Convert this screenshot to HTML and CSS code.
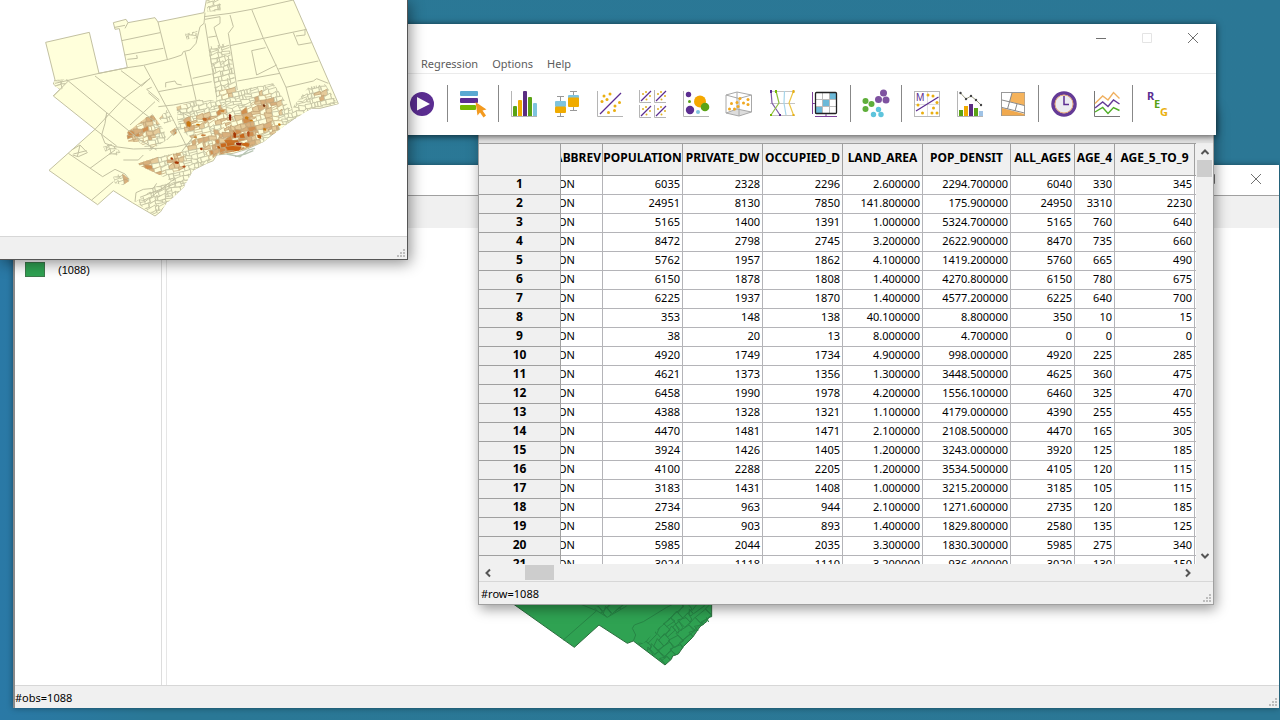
FILE: index.html
```html
<!DOCTYPE html>
<html lang="en">
<head>
<meta charset="utf-8">
<title>GeoDa</title>
<link rel="stylesheet" href="styles.css">
</head>
<body>
<main class="desktop">

  <section class="window map-window" aria-label="Map">
    <header class="titlebar">
      <button class="win-btn" aria-label="Minimize"><svg class="win-icon" viewBox="0 0 12 12"><path d="M1 6.5H11"/></svg></button>
      <button class="win-btn" aria-label="Maximize"><svg class="win-icon" viewBox="0 0 12 12"><path d="M1.500 1.500H10.500V10.500H1.500Z"/></svg></button>
      <button class="win-btn" aria-label="Close"><svg class="win-icon" viewBox="0 0 12 12"><path d="M1 1L11 11M11 1L1 11"/></svg></button>
    </header>
    <div class="map-tools"></div>
    <div class="map-body">
      <aside class="legend"><span class="swatch"></span><span>(1088)</span></aside>
      <div class="map-canvas">
        <svg class="map-svg" aria-label="Base map">
          <g transform="translate(303 302) scale(.33333)">
            <path class="green-land" d="M60 170L130 222L313 352L387 285L472 340L490 333L585 405L604 388L608 378L625 372L640 350L668 322L690 290L710 275L716 262L725 260V170Z"/>
            <path class="green-line" d="M280 330L380 242L330 222M380 242L412 262L470 228M490 333L497 315L487 295L493 285L520 275L590 232L610 222M709 262L716 276"/>
            <clipPath id="greenClip"><path d="M520 340L640 222H724V258L668 320L625 370L585 402L495 335Z"/><path d="M372 235L395 222H475L410 262Z"/></clipPath>
            <g id="greenMesh" clip-path="url(#greenClip)" class="green-line"></g>
          </g>
        </svg>
      </div>
    </div>
    <footer class="statusbar"><span>#obs=1088</span><svg class="grip" viewBox="0 0 9 9"><path d="M6 0h2v2h-2zM3 3h2v2h-2zM6 3h2v2h-2zM0 6h2v2h-2zM3 6h2v2h-2zM6 6h2v2h-2z"/></svg></footer>
  </section>

  <section class="window table-window" aria-label="Table">
    <div class="table-title"></div>
    <div class="table-area">
      <div class="table-clip">
        <table class="grid">
          <colgroup><col class="c-row"><col class="c-abbr"><col class="c-80"><col class="c-80"><col class="c-80"><col class="c-80"><col class="c-88"><col class="c-64"><col class="c-40"><col class="c-80"><col></colgroup>
          <thead><tr><th></th><th class="abbr"><div class="cut"><span>ABBREV</span></div></th><th>POPULATION</th><th>PRIVATE_DW</th><th>OCCUPIED_D</th><th>LAND_AREA</th><th>POP_DENSIT</th><th>ALL_AGES</th><th>AGE_4</th><th>AGE_5_TO_9</th><th></th></tr></thead>
          <tbody id="rows"></tbody>
        </table>
      </div>
      <div class="vscroll">
        <button class="arrow" aria-label="Scroll up"><svg viewBox="0 0 10 10"><path d="M1.500 7L5 3.500L8.500 7"/></svg></button>
        <div class="vthumb"></div>
        <button class="arrow last" aria-label="Scroll down"><svg viewBox="0 0 10 10"><path d="M1.500 3L5 6.500L8.500 3"/></svg></button>
      </div>
    </div>
    <div class="hscroll">
      <button class="arrow" aria-label="Scroll left"><svg viewBox="0 0 10 10"><path d="M7 1.500L3.500 5L7 8.500"/></svg></button>
      <div class="hthumb"></div>
      <button class="arrow last" aria-label="Scroll right"><svg viewBox="0 0 10 10"><path d="M3 1.500L6.500 5L3 8.500"/></svg></button>
    </div>
    <footer class="statusbar"><span>#row=1088</span><svg class="grip" viewBox="0 0 9 9"><path d="M6 0h2v2h-2zM3 3h2v2h-2zM6 3h2v2h-2zM0 6h2v2h-2zM3 6h2v2h-2zM6 6h2v2h-2z"/></svg></footer>
  </section>

  <section class="window main-window" aria-label="GeoDa">
    <header class="titlebar">
      <button class="win-btn" aria-label="Minimize"><svg class="win-icon" viewBox="0 0 12 12"><path d="M1 6.500H11"/></svg></button>
      <button class="win-btn faint" aria-label="Maximize" disabled><svg class="win-icon" viewBox="0 0 12 12"><path d="M1.500 1.500H10.500V10.500H1.500Z"/></svg></button>
      <button class="win-btn" aria-label="Close"><svg class="win-icon" viewBox="0 0 12 12"><path d="M1 1L11 11M11 1L1 11"/></svg></button>
    </header>
    <nav class="menubar"><button>Regression</button><button>Options</button><button>Help</button></nav>
    <div class="toolbar">
      <button aria-label="Time player"><svg viewBox="0 0 32 32"><circle cx="16" cy="16" r="12" fill="#5b2d91"/><path d="M11 9L24 16L11 22.500Z" fill="#fff"/></svg></button>
      <i class="sep"></i>
      <button aria-label="Category editor"><svg viewBox="0 0 32 32"><rect x="3" y="3" width="18" height="5" rx="1" fill="#5ba9d2"/><rect x="3" y="10" width="18" height="5" rx="1" fill="#5b2d91"/><rect x="3" y="17" width="16" height="5" rx="1" fill="#76b900"/><path d="M18.500 14L29.500 21.500L25.500 22.500L29 27.500L26.500 29.500L23 24.500L20.500 27.500Z" fill="#f39a1f"/></svg></button>
      <i class="sep"></i>
      <button aria-label="Histogram"><svg viewBox="0 0 32 32"><path d="M3.500 3V28.500H29" class="axis"/><path d="M5 28V19q0-1 1-1h2q1 0 1 1v9zM20 28V10q0-1 1-1h2q1 0 1 1v18z" fill="#5aa315"/><path d="M10 28V13q0-1 1-1h2q1 0 1 1v15z" fill="#f0ab00"/><path d="M15 28V4q0-1 1-1h2q1 0 1 1v24z" fill="#5b2d82"/><path d="M25 28V16q0-1 1-1h2q1 0 1 1v12z" fill="#7fc4de"/></svg></button>
      <button aria-label="Box plot"><svg viewBox="0 0 32 32"><path d="M9.500 8.500V28.500M6 8.500H13M6 28.500H13M22.500 3.500V22.500M19 3.500H26M19 22.500H26" fill="none" stroke="#999"/><rect x="4" y="13" width="11" height="6" rx="1" fill="#7fc4de"/><rect x="4" y="18.500" width="11" height="6.500" rx="1" fill="#f0ab00"/><rect x="17" y="7" width="11" height="5" rx="1" fill="#7fc4de"/><rect x="17" y="9.500" width="11" height="9.500" rx="1" fill="#f0ab00"/></svg></button>
      <button aria-label="Scatter plot"><svg viewBox="0 0 32 32"><path d="M3.500 3V28.500H29" class="axis"/><path d="M6 26L27 5" stroke="#5b2d91" stroke-width="1.300"/><g fill="#eaaf10"><circle cx="10" cy="8" r="1.500"/><circle cx="16" cy="6" r="1.500"/><circle cx="13" cy="11.500" r="1.500"/><circle cx="8" cy="13.500" r="1.500"/><circle cx="25.500" cy="14.500" r="1.500"/><circle cx="21" cy="18" r="1.500"/><circle cx="20.500" cy="22.500" r="1.500"/><circle cx="14.500" cy="24.500" r="1.500"/></g></svg></button>
      <button aria-label="Scatter plot matrix"><svg viewBox="0 0 32 32"><defs><g id="mini"><path d="M.5 0V12.500H12" class="axis"/><path d="M2 11L12 1" stroke="#5b2d91" stroke-width="1.300"/><g fill="#e0b020"><circle cx="4" cy="4" r="1"/><circle cx="7" cy="2" r="1"/><circle cx="11" cy="6" r="1"/><circle cx="7.500" cy="9.500" r="1"/></g></g></defs><use href="#mini" x="2" y="2"/><use href="#mini" x="17" y="2"/><use href="#mini" x="2" y="17"/><use href="#mini" x="17" y="17"/></svg></button>
      <button aria-label="Bubble chart"><svg viewBox="0 0 32 32"><path d="M3.500 3V28.500H29" class="axis"/><circle cx="8.500" cy="6.500" r="2.700" fill="#5b2d91"/><circle cx="9.500" cy="13.500" r="1.500" fill="#5aa315"/><circle cx="20" cy="13.500" r="6" fill="#f5a800"/><circle cx="25" cy="19" r="4.300" fill="#5aa315"/><circle cx="10" cy="22" r="4.200" fill="#5b2d91"/><circle cx="18" cy="24" r="2" fill="#7fc4de"/></svg></button>
      <button aria-label="3D scatter plot"><svg viewBox="0 0 32 32"><path d="M3 25L14 21L28.500 24L16 28Z" fill="#ddd"/><path d="M3 7L14 4L28.500 7L16 10.500ZM3 7V25L16 28L28.500 24V7M16 10.500V28M14 4V21M3 25L14 21L28.500 24" fill="none" stroke="#a8a8a8"/><g fill="#f0a820"><circle cx="8.500" cy="15.500" r="1.500"/><circle cx="14" cy="14.500" r="1.500"/><circle cx="17" cy="10.500" r="1.500"/><circle cx="25" cy="11.500" r="1.500"/><circle cx="20.500" cy="15" r="1.500"/><circle cx="25" cy="16.500" r="1.500"/><circle cx="6.500" cy="21" r="1.500"/><circle cx="11.500" cy="21" r="1.500"/><circle cx="15" cy="18.500" r="1.500"/></g></svg></button>
      <button aria-label="Parallel coordinate plot"><svg viewBox="0 0 32 32"><path d="M4 3.500H29M4 15.500H29M4 27.500H29" stroke="#c4c4c4"/><g fill="none" stroke-width="1.200"><path d="M5 3L6 15L14 27" stroke="#7d5ba6"/><path d="M10 3L13 15L5 27" stroke="#8fbe3f"/><path d="M18.500 3L18 15L20 27" stroke="#a6d5ea"/><path d="M27.500 3L23 15L27.500 27" stroke="#ecc545"/></g><path d="M4 2h2v3H4zM13 26h2v2h-2z" fill="#5b2d91"/><path d="M9 2h2v3H9zM4 26h2v2H4z" fill="#76b900"/><path d="M26.500 2h2v3h-2zM26.500 26h2v2h-2z" fill="#eaaf10"/></svg></button>
      <button aria-label="Conditional plot"><svg viewBox="0 0 32 32"><path d="M20 5h7v7h-7zM13 12h7v7h-7zM6 19h7v7H6z" fill="#6cb9d8"/><path d="M13.500 5V26M20.500 5V26M7 11.500H28M7 18.500H28" stroke="#bbb"/><rect x="6.500" y="4.500" width="21" height="21" rx="1" fill="none" stroke="#222" stroke-width="1.300"/><path d="M3.500 4V26M3.500 15.500H6M6 28.500H28M17 26V28" stroke="#7d3f98"/></svg></button>
      <i class="sep"></i>
      <button aria-label="Cluster maps"><svg viewBox="0 0 32 32"><g fill="#7e52a0"><circle cx="23.500" cy="5" r="3.500"/><circle cx="18.500" cy="11.500" r="3.500"/><circle cx="26" cy="12" r="3.500"/></g><g fill="#5fae3a"><circle cx="5.500" cy="13" r="3"/><circle cx="11.500" cy="16" r="3"/><circle cx="5.500" cy="21" r="3"/></g><g fill="#5ec4dc"><circle cx="18.500" cy="21.500" r="2.700"/><circle cx="13.500" cy="26.500" r="2.700"/><circle cx="21" cy="26.500" r="2.700"/></g></svg></button>
      <i class="sep"></i>
      <button aria-label="Moran scatter plot"><svg viewBox="0 0 32 32"><rect x="3.500" y="3.500" width="25" height="25" fill="#fff" stroke="#b8b8b8"/><path d="M16.500 4V28M4 16.500H28" stroke="#ddd"/><path d="M5 23L27.500 9" stroke="#5b2d91" stroke-width="1.300"/><text x="5" y="13" class="m-letter">M</text><g fill="#eaaf10"><circle cx="17" cy="7" r="1.500"/><circle cx="22" cy="8" r="1.500"/><circle cx="26" cy="14.500" r="1.500"/><circle cx="7" cy="17" r="1.500"/><circle cx="22.500" cy="20" r="1.500"/><circle cx="11.500" cy="25" r="1.500"/><circle cx="21" cy="25" r="1.500"/><circle cx="26" cy="25" r="1.500"/></g></svg></button>
      <button aria-label="Correlogram"><svg viewBox="0 0 32 32"><path d="M3.500 3V28.500H29" class="axis"/><path d="M6.500 5L12 11L17 8L22 12L27 17" fill="none" stroke="#9a9a80"/><g fill="#444"><circle cx="6.500" cy="5" r="1.200"/><circle cx="12" cy="11" r="1.200"/><circle cx="17" cy="8" r="1.200"/><circle cx="22" cy="12" r="1.200"/><circle cx="27" cy="17" r="1.200"/></g><path d="M5 22h4v6H5zM20 20h4v8h-4z" fill="#5aa315"/><path d="M10 18h4v10h-4z" fill="#f0ab00"/><path d="M15 16h4v12h-4z" fill="#5b2d82"/><path d="M25 23h4v5h-4z" fill="#9fc3e6"/></svg></button>
      <button aria-label="Cartographic base map"><svg viewBox="0 0 32 32"><rect x="4.500" y="4.500" width="23" height="23" fill="#fff" stroke="#999"/><path d="M15 5H27.500V17.500L12.500 13.500Z" fill="#f5b35c"/><path d="M5 20L27.500 26V27.500H5Z" fill="#f0a94e"/><path d="M15 5L10.500 21M5 12L27.500 17.500M5 19.500L27.500 25M20 16L18 23" fill="none" stroke="#888"/></svg></button>
      <i class="sep"></i>
      <button aria-label="Time"><svg viewBox="0 0 32 32"><circle cx="16" cy="16" r="11" fill="#ececf1" stroke="#643a96" stroke-width="3.500"/><circle cx="16" cy="16" r="9" fill="none" stroke="#e3a578"/><path d="M16 8V16.500H21" fill="none" stroke="#5b2d91" stroke-width="1.500"/></svg></button>
      <button aria-label="Averages chart"><svg viewBox="0 0 32 32"><path d="M3.500 3V28.500H29" fill="none" stroke="#777"/><g fill="none" stroke-width="1.400"><path d="M4 15.500L11.700 8L17 12L22.500 4.500L28.500 10.500" stroke="#f0b060"/><path d="M4 20L11.700 14L17 18.500L22.500 12L28.500 16" stroke="#643a96"/><path d="M4 24L11.700 19.500L17 25.500L22.500 19.500L28.500 22.500" stroke="#4fae25"/></g></svg></button>
      <i class="sep"></i>
      <button aria-label="Regression"><svg viewBox="0 0 32 32"><g class="reg"><text x="5" y="12" fill="#5b2d91">R</text><text x="12" y="20" fill="#5aa315">E</text><text x="18" y="28" fill="#eab010">G</text></g></svg></button>
    </div>
  </section>

  <section class="window choro-window" aria-label="Choropleth map">
    <div class="choro-body">
      <svg class="choro-svg" viewBox="0 0 1221 708" preserveAspectRatio="xMinYMin meet" aria-label="Population density map">
        <defs>
          <clipPath id="dense">
            <path d="M530 320L600 300L650 300L625 142L686 128L710 272L820 250L872 330L925 262L975 252L1013 311L935 325L870 365L790 425L735 448L650 465L620 490L580 510L552 560L465 646L405 605L432 590L460 562L520 545L410 492L475 470L545 455L575 415L535 385Z"/>
            <path d="M378 400L455 340L492 390L500 420L450 452L415 425L385 425Z"/>
            <path d="M478 355L500 330L520 360L495 372ZM510 395L530 380L542 388L520 408ZM620 0H662V34H622ZM555 102L592 92V115L560 118ZM340 530L365 520L392 540L370 555L345 550ZM310 440L330 430L362 455L345 470L318 458ZM162 240L205 238L185 268L165 260Z"/>
          </clipPath>
        </defs>
        <path class="land" d="M137 127L268 97L297 220L382 203L358 86L345 88L340 68L378 58L384 68L465 53L474 66L612 38L619 0V-20H872L880 0L1015 311L960 325L935 325L905 340L870 365L845 382L790 425L740 448L700 460L650 465L640 482L620 490L580 510L552 540L552 560L520 590L500 605L482 635L465 648L397 608L340 572L293 614L147 511L285 388L160 288L180 268L160 252L165 240Z"/>
        <g id="choroMesh" clip-path="url(#dense)"></g>
        <g class="tract">
          <path d="M165 250L297 220L382 203L430 196L505 178L525 172L545 165L550 155L570 150L588 130L600 80L612 70L615 38M205 243L320 338L420 420L470 450M205 243L160 288M285 228L465 365M363 212L425 258L450 235L372 295L285 388L350 438M432 196L475 275L520 360L560 440M475 275L635 245M475 320L520 315L600 300M555 155L588 300M578 235L635 222M365 122L480 98M374 165L490 145M474 66L502 178M382 178L412 175L410 165M375 85L384 68M345 82L375 76"/>
          <path d="M615 70L640 225L650 290M612 50L690 40L755 28L880 0M755 28L790 115L830 200L858 262L875 325M690 45L700 80L685 100L712 270M690 137L790 115L920 88M797 143L755 152L770 225L830 195M835 207L955 183M712 243L840 220M858 262L940 243L950 236L985 250M880 98L895 135L935 128M915 88V105L888 108M615 58L660 50V70L642 82L650 108L625 112M650 108L660 140M497 262V248L525 243L530 252L545 255M455 262L440 268L478 300M445 278L478 306"/>
          <path d="M320 338L315 370L305 405L315 430L345 440L400 447L480 445L530 440L570 430M205 460L308 530L345 508L375 522L385 535M270 505L345 450M275 600L340 545M370 480L415 480L430 465M322 345L315 355M465 305L390 375M570 350L530 330M405 605L408 578L430 568L460 565L470 550M545 455L580 410M500 420L535 385M215 450L240 435L262 458L235 470L218 465M240 435L232 470M220 462L260 452M420 592L540 545M435 605L525 535"/>
        </g>
        <path class="coast" d="M680 462L720 470L745 450L765 445M705 470L735 462L760 452"/>
        <g id="hotspots"></g>
      </svg>
    </div>
    <footer class="statusbar"><span></span><svg class="grip" viewBox="0 0 9 9"><path d="M6 0h2v2h-2zM3 3h2v2h-2zM6 3h2v2h-2zM0 6h2v2h-2zM3 6h2v2h-2zM6 6h2v2h-2z"/></svg></footer>
  </section>

</main>
<script src="app.js"></script>
</body>
</html>
```
FILE: styles.css
```css
* { box-sizing: border-box; }
body {
  margin: 0;
  font-family: "Noto Sans", "Open Sans", sans-serif;
  font-size: 11px;
  color: #000;
}
button {
  border: 0;
  padding: 0;
  background: none;
  font: inherit;
  color: inherit;
}
.desktop {
  position: relative;
  height: 100vh;
  overflow: hidden;
  background: linear-gradient(90deg, #2a79a6, #2a7896 12%, #2b7795);
}
.window {
  position: absolute;
  display: flex;
  flex-direction: column;
  background: #fff;
}
.map-window {
  left: 13px;
  right: 1px;
  top: 165px;
  bottom: 12px;
  border-left: 2px solid #8a8a8a;
  box-shadow: 0 0 6px rgba(0, 0, 0, .4);
}
.table-window {
  left: 478px;
  right: 66px;
  top: 105px;
  bottom: 115px;
  border: 1px solid #a0a0a0;
  box-shadow: 2px 4px 12px rgba(0, 0, 0, .4);
}
.main-window {
  left: 400px;
  right: 64px;
  top: 24px;
  box-shadow: 0 1px 7px rgba(0, 0, 0, .7);
}
.choro-window {
  left: 0;
  width: 408px;
  top: 0;
  border-right: 1px solid #555;
  border-bottom: 1px solid #555;
  box-shadow: 2px 3px 14px rgba(0, 0, 0, .45);
}
.titlebar {
  display: flex;
  justify-content: flex-end;
  height: 30px;
  padding-bottom: 2px;
  flex: none;
}
.win-btn {
  width: 46px;
  display: flex;
  align-items: center;
  justify-content: center;
}
.win-icon {
  width: 12px;
  height: 12px;
  fill: none;
  stroke: #707070;
}
.faint .win-icon { stroke: #e4e4e4; }

.map-tools {
  height: 33px;
  flex: none;
  border-top: 1px solid #a0a0a0;
  background: #f0f0f0;
}
.map-body { display: flex; flex: 1; min-height: 0; }
.legend {
  width: 147px;
  padding: 34px 0 0 10px;
  display: flex;
  align-items: flex-start;
  gap: 13px;
  border-right: 1px solid #ddd;
  font: 11px/16px "Liberation Sans", Arial, sans-serif;
}
.swatch {
  width: 20px;
  height: 15px;
  border: 1px solid #3d7a4c;
  background: #2fa252;
}
.map-canvas {
  flex: 1;
  min-width: 0;
  margin-left: 4px;
  border-left: 1px solid #e6e6e6;
}
.map-svg { display: block; width: 100%; height: 100%; }
.green-land { fill: #2fa252; stroke: #2a6b3c; stroke-width: 3; }
.green-line { fill: none; stroke: #278545; stroke-width: 3; }

.statusbar {
  display: flex;
  align-items: center;
  justify-content: space-between;
  height: 23px;
  flex: none;
  border-top: 1px solid #d7d7d7;
  background: #f0f0f0;
  padding-left: 2px;
}
.map-window .statusbar { padding-left: 0; }
.grip {
  width: 9px;
  height: 9px;
  margin: 0 1px 1px 0;
  align-self: flex-end;
  fill: #bdbdbd;
}

.menubar {
  display: flex;
  gap: 14px;
  height: 20px;
  padding-left: 21px;
  border-bottom: 1px solid #ebebeb;
  color: #5c5c5c;
}
.toolbar {
  display: flex;
  align-items: center;
  height: 61px;
  padding-bottom: 2px;
}
.toolbar button {
  width: 43px;
  flex: none;
  display: flex;
  justify-content: center;
}
.toolbar svg { width: 32px; height: 32px; display: block; }
.sep {
  width: 8px;
  height: 37px;
  flex: none;
  background: linear-gradient(#888, #888) center / 1px 100% no-repeat;
}
.axis { fill: none; stroke: #b5b5b5; }
.m-letter { font: 10px "Liberation Sans", Arial, sans-serif; fill: #5b2d91; }
.reg { font: bold 11px "Noto Sans", sans-serif; }

.table-title { height: 37px; flex: none; background: #e4e4e4; }
.table-area { display: flex; flex: 1; min-height: 0; }
.table-clip {
  flex: 1;
  min-width: 0;
  overflow: hidden;
  border-top: 1px solid #a0a0a0;
}
.grid {
  width: 100%;
  table-layout: fixed;
  border-collapse: separate;
  border-spacing: 0;
}
.grid th, .grid td {
  padding: 0 2px 2px;
  border-right: 1px solid #b4b4b8;
  border-bottom: 1px solid #b4b4b8;
  white-space: nowrap;
  overflow: hidden;
  line-height: 16px;
}
.grid td { text-align: right; }
.grid th { background: #f0f0f0; border-color: #a0a0a0; padding: 0 0 2px; font-size: 12px; }
.grid thead th { height: 32px; padding: 0 0 3px; }
.grid tr > :last-child { border-right: 0; padding: 0; }
.grid .abbr { text-align: left; padding-left: 0; padding-right: 0; }
.cut { display: flex; justify-content: flex-end; overflow: hidden; padding-right: 1px; }
td .cut { display: block; text-indent: -3px; }
.c-row { width: 82px; }
.c-abbr { width: 42px; }
.c-40 { width: 40px; }
.c-64 { width: 64px; }
.c-80 { width: 80px; }
.c-88 { width: 88px; }
.vscroll {
  width: 17px;
  display: flex;
  flex-direction: column;
  align-items: center;
  background: #f0f0f0;
}
.vthumb { width: 15px; height: 17px; background: #cdcdcd; }
.arrow {
  width: 17px;
  height: 17px;
  display: flex;
  align-items: center;
  justify-content: center;
}
.arrow svg { width: 10px; height: 10px; fill: none; stroke: #555; stroke-width: 2; }
.vscroll .last { margin-top: auto; }
.hscroll {
  display: flex;
  align-items: center;
  height: 17px;
  flex: none;
  padding-right: 17px;
  background: #f0f0f0;
}
.hthumb { width: 29px; height: 15px; margin-left: 29px; background: #cdcdcd; }
.hscroll .last { margin-left: auto; }

.choro-body { height: 236px; overflow: hidden; }
.choro-svg { display: block; width: 407px; height: 236px; }
.land { fill: #ffffdb; stroke: #c3c1a2; stroke-width: 3; }
.tract { fill: none; stroke: #c3c1a2; stroke-width: 3; }
.coast { fill: none; stroke: #b9c6b4; stroke-width: 4; }
```
FILE: app.js
```js
const rows = [
  [6035, 2328, 2296, "2.600000", "2294.700000", 6040, 330, 345],
  [24951, 8130, 7850, "141.800000", "175.900000", 24950, 3310, 2230],
  [5165, 1400, 1391, "1.000000", "5324.700000", 5165, 760, 640],
  [8472, 2798, 2745, "3.200000", "2622.900000", 8470, 735, 660],
  [5762, 1957, 1862, "4.100000", "1419.200000", 5760, 665, 490],
  [6150, 1878, 1808, "1.400000", "4270.800000", 6150, 780, 675],
  [6225, 1937, 1870, "1.400000", "4577.200000", 6225, 640, 700],
  [353, 148, 138, "40.100000", "8.800000", 350, 10, 15],
  [38, 20, 13, "8.000000", "4.700000", 0, 0, 0],
  [4920, 1749, 1734, "4.900000", "998.000000", 4920, 225, 285],
  [4621, 1373, 1356, "1.300000", "3448.500000", 4625, 360, 475],
  [6458, 1990, 1978, "4.200000", "1556.100000", 6460, 325, 470],
  [4388, 1328, 1321, "1.100000", "4179.000000", 4390, 255, 455],
  [4470, 1481, 1471, "2.100000", "2108.500000", 4470, 165, 305],
  [3924, 1426, 1405, "1.200000", "3243.000000", 3920, 125, 185],
  [4100, 2288, 2205, "1.200000", "3534.500000", 4105, 120, 115],
  [3183, 1431, 1408, "1.000000", "3215.200000", 3185, 105, 115],
  [2734, 963, 944, "2.100000", "1271.600000", 2735, 120, 185],
  [2580, 903, 893, "1.400000", "1829.800000", 2580, 135, 125],
  [5985, 2044, 2035, "3.300000", "1830.300000", 5985, 275, 340],
  [3024, 1118, 1110, "3.200000", "936.400000", 3020, 130, 150]
];
document.getElementById("rows").innerHTML = rows.map((r, i) =>
  `<tr><th>${i + 1}</th><td class="abbr"><div class="cut">ON</div></td>` +
  r.map(v => `<td>${v}</td>`).join("") + "<td></td></tr>").join("");

let seed = 11;
const rnd = () => (seed = (seed * 16807) % 2147483647) / 2147483647;

// [x, y, radius, strength] of dense neighbourhoods
const hot = [
  [700, 430, 60, 1], [430, 395, 50, .55], [395, 405, 25, .75], [455, 360, 25, .6],
  [790, 315, 45, .6], [745, 350, 35, .65], [665, 345, 28, .6], [620, 365, 30, .55],
  [570, 372, 22, .65], [685, 280, 28, .45], [605, 292, 22, .5], [835, 325, 22, .55],
  [750, 400, 40, .65], [600, 420, 40, .5], [440, 500, 34, .6], [480, 520, 22, .5],
  [530, 485, 32, .6], [820, 378, 34, .55], [965, 288, 24, .42], [525, 392, 16, .7],
  [545, 325, 20, .4], [378, 540, 12, .55], [640, 460, 25, .65], [465, 445, 20, .4],
  [330, 450, 20, .3]
];
const shade = s => s > .85 ? "#c8681c" : s > .62 ? "#d08f50" : s > .42 ? "#d9b07c" : s > .3 ? "#e5cb9a" : "#ffffdb";

function mesh(x0, y0, x1, y1, size, angle, cell) {
  const a = angle * Math.PI / 180, c = Math.cos(a), s = Math.sin(a);
  const cx = (x0 + x1) / 2, cy = (y0 + y1) / 2, r = Math.hypot(x1 - x0, y1 - y0) / 2;
  const pt = (u, v) => [cx + u * c - v * s, cy + u * s + v * c];
  for (let v = -r; v < r; v += size) {
    for (let u = -r + rnd() * size; u < r;) {
      const w = size * (.4 + rnd() * 1.5);
      const h = size * (rnd() < .25 ? .5 : 1);
      const j = (rnd() - .5) * size * .6;
      const k = (rnd() - .5) * size * .4;
      const p = [pt(u, v + j), pt(u + w, v - j), pt(u + w + k, v + h + k), pt(u, v + h)];
      const m = pt(u + w / 2, v + h / 2);
      if (m[0] > x0 && m[0] < x1 && m[1] > y0 && m[1] < y1)
        cell("M" + p.map(q => q.map(Math.round).join(" ")).join("L") + "Z", m[0], m[1]);
      u += w;
    }
  }
}

let out = "";
mesh(150, -10, 1030, 660, 14, -13, (d, x, y) => {
  let s = 0;
  for (const [hx, hy, hr, hs] of hot) s = Math.max(s, hs * Math.exp(-((x - hx) ** 2 + (y - hy) ** 2) / (hr * hr)));
  const f = shade(s * (.4 + rnd() * .95));
  const line = f !== "#ffffdb" ? "#c4a679" : s > .3 ? "#cbb98f" : "#c3c1a2";
  out += `<path d="${d}" fill="${f}" stroke="${line}" stroke-width="2.600"/>`;
});
document.getElementById("choroMesh").innerHTML = out;

const spots = [
  [690, 352, 8, 22, "#8c1d04"], [704, 406, 9, 18, "#a63603"], [716, 432, 18, 9, "#8c1d04"],
  [745, 402, 8, 18, "#b5501c"], [604, 447, 8, 8, "#a63603"], [530, 488, 14, 8, "#a63603"],
  [515, 476, 8, 8, "#a63603"], [552, 500, 10, 7, "#b5501c"], [778, 410, 14, 12, "#b85a10"],
  [566, 372, 13, 18, "#c9770f"], [614, 358, 14, 10, "#c06a28"], [740, 354, 12, 10, "#cc7a10"],
  [754, 362, 10, 6, "#cc7a10"], [792, 317, 8, 8, "#7a3510"], [700, 445, 50, 14, "#cc6414"],
  [690, 425, 36, 12, "#c97328"], [738, 434, 22, 12, "#cc6a18"], [656, 442, 10, 8, "#b85a10"],
  [594, 374, 12, 6, "#cc7a10"], [794, 388, 10, 8, "#c9770f"], [838, 374, 8, 8, "#c9770f"],
  [667, 333, 14, 8, "#d08a3c"], [586, 412, 10, 6, "#c98a3c"], [610, 406, 16, 6, "#c98040"]
];
spots.sort((a, b) => b[2] * b[3] - a[2] * a[3]);
document.getElementById("hotspots").innerHTML = spots.map(([x, y, w, h, f]) =>
  `<path d="M${x - w / 2} ${y - h / 3}L${x} ${y - h / 2}L${x + w / 2} ${y - h / 4}L${x + w / 3} ${y + h / 2}L${x - w / 3} ${y + h / 3}Z" fill="${f}"/>`).join("");

let green = "";
mesh(370, 220, 730, 405, 25, -42, d => { green += d; });
document.getElementById("greenMesh").innerHTML = `<path d="${green}"/>`;
```
